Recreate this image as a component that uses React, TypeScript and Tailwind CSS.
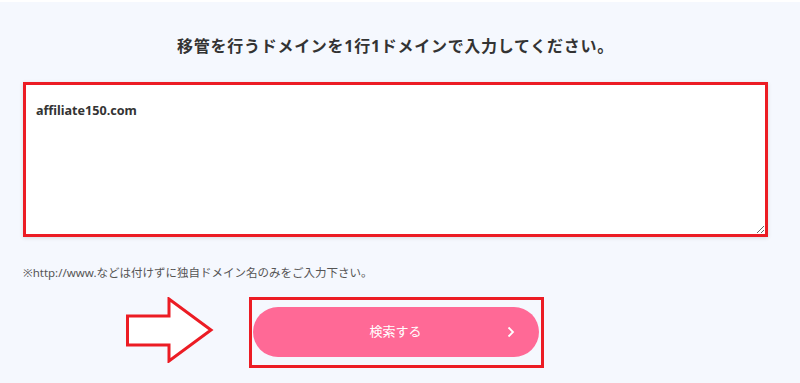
import React from "react";

export default function App() {
  return (
    <div
      className="w-full h-[383px] bg-[#f5f8fe] border-t-2 border-white overflow-hidden"
      style={{ fontFamily: '"Noto Sans", "Noto Sans CJK JP", sans-serif' }}
    >
      <div className="pl-[23px] pr-[32px]">
        <h2 className="mt-[32px] h-6 text-center text-[16px] leading-6 font-bold text-[#333] tracking-[0.045em]">
          移管を行うドメインを1行1ドメインで入力してください。
        </h2>
        <textarea
          className="mt-6 block w-full h-[155px] bg-white border-[3px] border-[#ec1c24] shadow-[0_1px_4px_rgba(0,0,0,0.12)] pl-[10px] pt-[16px] text-[12.6px] leading-5 font-bold text-[#333] outline-none"
          defaultValue="affiliate150.com"
        />
        <p className="mt-[27px] text-[11.5px] leading-[18px] text-[#555]">
          ※http://www.などは付けずに独自ドメイン名のみをご入力下さい。
        </p>
        <div className="mt-[15px] flex justify-center">
          <div className="relative ml-[1px]">
            <svg
              className="absolute left-[-123px] top-0"
              width="88"
              height="66"
              viewBox="0 0 88 66"
            >
              <polygon
                points="1.5,19 43,19 43,2 85,33 43,64 43,48 1.5,48"
                fill="#ffffff"
                stroke="#ec1c24"
                strokeWidth="3"
                strokeLinejoin="miter"
              />
            </svg>
            <div className="border-[3px] border-[#ec1c24] pl-[1px] pr-[2px] pt-[7px] pb-[8px]">
              <button className="w-[286px] h-[50px] rounded-full bg-[#ff6996] text-white text-[13px] relative flex items-center justify-center">
                <span>検索する</span>
                <svg
                  className="absolute right-[24px] top-1/2 -translate-y-1/2"
                  width="8"
                  height="11"
                  viewBox="0 0 8 11"
                >
                  <path d="M1.5 1 L6 5.5 L1.5 10" fill="none" stroke="#ffffff" strokeWidth="1.8" />
                </svg>
              </button>
            </div>
          </div>
        </div>
      </div>
    </div>
  );
}
